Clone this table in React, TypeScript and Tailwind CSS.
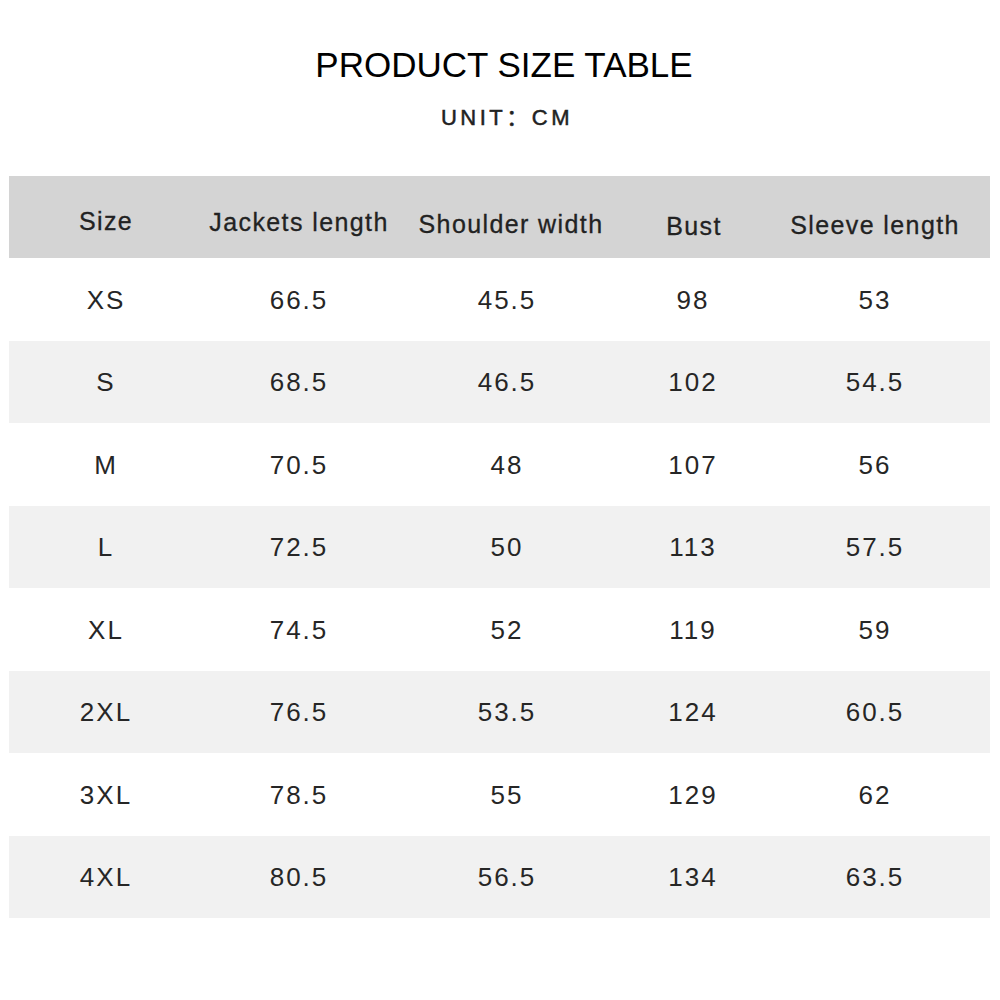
const headers = [
  { label: 'Size', cls: 'pt-[10px]' },
  { label: 'Jackets length', cls: 'pt-[12px]' },
  { label: 'Shoulder width', cls: 'pt-[16px] pl-[8px]' },
  { label: 'Bust', cls: 'pt-[20px] pl-[2px]' },
  { label: 'Sleeve length', cls: 'pt-[18px]' },
];

const rows: string[][] = [
  ['XS', '66.5', '45.5', '98', '53'],
  ['S', '68.5', '46.5', '102', '54.5'],
  ['M', '70.5', '48', '107', '56'],
  ['L', '72.5', '50', '113', '57.5'],
  ['XL', '74.5', '52', '119', '59'],
  ['2XL', '76.5', '53.5', '124', '60.5'],
  ['3XL', '78.5', '55', '129', '62'],
  ['4XL', '80.5', '56.5', '134', '63.5'],
];

const cols = 'grid grid-cols-[194px_192px_224px_148px_216px]';

export default function App() {
  return (
    <div
      className="w-[1000px] h-[1000px] bg-white text-[#222] overflow-hidden"
      style={{ fontFamily: '"Liberation Sans", Arial, "Noto Sans CJK SC", sans-serif' }}
    >
      {/* Title */}
      <div className="pt-[45px] flex flex-col items-center">
        <h1 className="text-[35px] leading-[40px] text-black pl-[8px]">PRODUCT SIZE TABLE</h1>
        <p className="mt-[20px] text-[22px] leading-[26px] tracking-[3.5px] text-[#222] [-webkit-text-stroke:0.5px_#222] pl-[14px]">
          UNIT：CM
        </p>
      </div>

      {/* Table */}
      <div className="mt-[45px] mx-[9px] w-[981px]">
        <div className={`${cols} h-[82px] bg-[#d4d4d4] items-center`}>
          {headers.map(h => (
            <div key={h.label} className={`text-center text-[25px] tracking-[1.4px] text-[#222] [-webkit-text-stroke:0.3px_#222] ${h.cls}`}>
              {h.label}
            </div>
          ))}
        </div>
        {rows.map((r, i) => (
          <div key={r[0]} className={`${cols} h-[82.5px] items-center ${i % 2 === 1 ? 'bg-[#f1f1f1]' : 'bg-white'}`}>
            {r.map((v, j) => (
              <div key={j} className="text-center text-[26px] tracking-[2px] text-[#262626] pt-[2px]">{v}</div>
            ))}
          </div>
        ))}
      </div>
    </div>
  );
}
